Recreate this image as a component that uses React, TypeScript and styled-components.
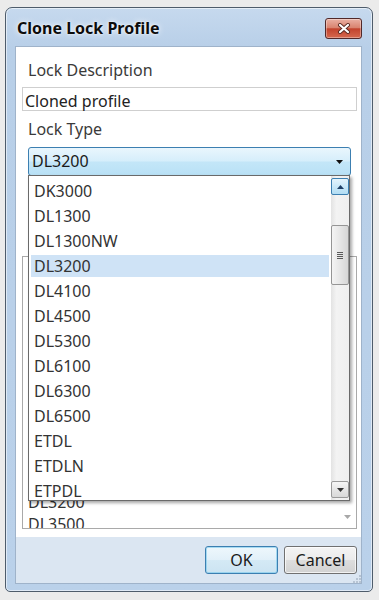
import React from "react";
import styled, { createGlobalStyle } from "styled-components";

const lockTypes = [
  "DK3000",
  "DL1300",
  "DL1300NW",
  "DL3200",
  "DL4100",
  "DL4500",
  "DL5300",
  "DL6100",
  "DL6300",
  "DL6500",
  "ETDL",
  "ETDLN",
  "ETPDL",
];

// only the tail of the profile list shows below the open dropdown
const profileLocks = ["DL3200", "DL3500"];

const GlobalStyle = createGlobalStyle`
  body {
    margin: 0;
    background: #ebebeb;
    font-family: "Noto Sans", "Open Sans", sans-serif;
  }
`;

const Page = styled.div`
  padding: 7px 0 0 5px;
`;

const Window = styled.div`
  width: 368px;
  height: 585px;
  box-sizing: border-box;
  border: 1px solid #4e5c6b;
  border-radius: 7px 7px 5px 5px;
  background: linear-gradient(#c6d9ee 0, #b8cfe8 40px, #bad1ea 100%);
  box-shadow: inset 0 0 0 1px rgba(255, 255, 255, 0.55);
  display: flex;
  flex-direction: column;
`;

const TitleBar = styled.div`
  height: 38px;
  flex-shrink: 0;
  display: flex;
  justify-content: space-between;
  align-items: flex-start;
  padding-left: 11px;
`;

const Title = styled.div`
  margin-top: 10px;
  font-size: 16px;
  line-height: 20px;
  font-weight: 700;
  color: #0c0c0c;
  text-shadow: 0 0 6px rgba(255, 255, 255, 0.95), 0 0 2px #fff;
`;

const CloseButton = styled.div`
  width: 37px;
  height: 21px;
  box-sizing: border-box;
  margin: 10px 10px 0 0;
  border: 1px solid #51292a;
  border-radius: 3px;
  background: linear-gradient(#eab0a3 0%, #d98470 45%, #c2432d 52%, #d5694f 100%);
  box-shadow: inset 0 0 0 1px rgba(255, 255, 255, 0.35);
  display: flex;
  align-items: center;
  justify-content: center;
`;

const Frame = styled.div`
  flex: 1;
  display: flex;
  padding: 0 10px 7px 9px;
`;

const Client = styled.div`
  flex: 1;
  display: flex;
  flex-direction: column;
  border: 1px solid #9fb3ca;
  background: #fff;
`;

const Content = styled.div`
  flex: 1;
  display: flex;
  flex-direction: column;
  padding: 12px 4px 0 6px;
`;

const Label = styled.div<{ gap?: number }>`
  margin-top: ${(p) => p.gap ?? 0}px;
  padding-left: 6px;
  font-size: 16px;
  line-height: 22px;
  color: #3a3a3a;
`;

const TextBox = styled.div`
  margin-top: 6px;
  height: 24px;
  box-sizing: border-box;
  border: 1px solid #cfcfcf;
  padding: 3px 2px 0;
  font-size: 16px;
  line-height: 20px;
  color: #222;
  white-space: nowrap;
`;

const Combo = styled.div`
  position: relative;
  margin: 7px 6px 0;
  height: 29px;
  box-sizing: border-box;
  border: 1px solid #3c7fb1;
  border-radius: 3px;
  background: linear-gradient(#e9f6fd 0%, #d6eefb 48%, #c3e6f8 52%, #b9e1f6 100%);
  padding: 2px 7px 0 3px;
  display: flex;
  justify-content: space-between;
  align-items: flex-start;
  font-size: 16px;
  line-height: 22px;
  color: #1a1a1a;
`;

const ComboArrow = styled.svg`
  margin-top: 10px;
`;

const Popup = styled.div`
  position: absolute;
  top: 100%;
  left: -1px;
  width: 322px;
  height: 326px;
  box-sizing: border-box;
  border: 1px solid #6a6a6a;
  background: #fff;
  box-shadow: 2px 2px 3px rgba(0, 0, 0, 0.35);
  display: flex;
  z-index: 2;
`;

const PopupItems = styled.div`
  flex: 1;
  overflow: hidden;
  padding: 3px 2px 0;
`;

const PopupItem = styled.div<{ selected?: boolean }>`
  height: 25px;
  padding-left: 3px;
  font-size: 16px;
  line-height: 25px;
  color: #333;
  background: ${(p) => (p.selected ? "#cfe3f6" : "transparent")};
  box-shadow: ${(p) =>
    p.selected ? "inset 0 1px 0 #fff, inset 0 -2px 0 #fff" : "none"};
`;

const ScrollBar = styled.div`
  width: 18px;
  flex-shrink: 0;
  display: flex;
  flex-direction: column;
  padding: 2px 0;
  box-sizing: border-box;
  background: linear-gradient(to right, #e3e3e3, #f3f3f3 30%, #efefef);
`;

const ScrollButton = styled.div<{ hover?: boolean }>`
  height: 17px;
  box-sizing: border-box;
  border: 1px solid ${(p) => (p.hover ? "#3c7fb1" : "#9a9a9a")};
  border-radius: 2px;
  background: ${(p) =>
    p.hover
      ? "linear-gradient(#e4f4fc, #c9e8f8 50%, #b2ddf4)"
      : "linear-gradient(#f6f6f6, #e6e6e6 50%, #d9d9d9)"};
  display: flex;
  align-items: center;
  justify-content: center;
`;

const Track = styled.div`
  flex: 1;
`;

const Thumb = styled.div`
  margin-top: 30px;
  height: 60px;
  box-sizing: border-box;
  border: 1px solid #959595;
  border-radius: 2px;
  background: linear-gradient(to right, #f4f4f4, #e6e6e6 50%, #d6d6d6);
  display: flex;
  align-items: center;
  justify-content: center;
`;

const ListBox = styled.div`
  margin-top: 80px;
  height: 273px;
  box-sizing: border-box;
  border: 1px solid #a9a9a9;
  display: flex;
  overflow: hidden;
`;

const ListItems = styled.div`
  flex: 1;
  padding: 234px 0 0 5px;
`;

const ListItem = styled.div`
  height: 22px;
  font-size: 16px;
  line-height: 22px;
  color: #333;
`;

const ListScroll = styled.div`
  width: 18px;
  display: flex;
  flex-direction: column;
  justify-content: flex-end;
  align-items: center;
  padding-bottom: 9px;
`;

const Footer = styled.div`
  position: relative;
  height: 46px;
  flex-shrink: 0;
  background: #dbe6f2;
  display: flex;
  justify-content: flex-end;
  align-items: flex-start;
  gap: 6px;
  padding: 9px 4px 0 0;
  box-sizing: border-box;
`;

const Button = styled.div<{ primary?: boolean }>`
  width: 73px;
  height: 28px;
  box-sizing: border-box;
  border: 1px solid ${(p) => (p.primary ? "#3c7fb1" : "#707070")};
  border-radius: 3px;
  background: ${(p) =>
    p.primary
      ? "linear-gradient(#eef7fc, #e1f0f9 50%, #d4e9f5 52%, #cce4f2)"
      : "linear-gradient(#f4f4f4, #ebebeb 50%, #dddddd 52%, #d2d2d2)"};
  box-shadow: ${(p) =>
    p.primary
      ? "inset 0 0 0 1px rgba(120, 200, 235, 0.6)"
      : "inset 0 0 0 1px rgba(255, 255, 255, 0.7)"};
  display: flex;
  align-items: center;
  justify-content: center;
  font-size: 16px;
  color: #1a1a1a;
`;

const Grip = styled.svg`
  position: absolute;
  right: 0;
  bottom: 0;
`;

export default function App() {
  return (
    <>
      <GlobalStyle />
      <Page>
        <Window>
          <TitleBar>
            <Title>Clone Lock Profile</Title>
            <CloseButton>
              <svg width="14" height="11" viewBox="0 0 14 11">
                <path
                  d="M3 2 L11 9 M11 2 L3 9"
                  stroke="#5a2a22"
                  strokeWidth="4"
                  strokeLinecap="round"
                />
                <path
                  d="M3 2 L11 9 M11 2 L3 9"
                  stroke="#fff"
                  strokeWidth="2.2"
                  strokeLinecap="round"
                />
              </svg>
            </CloseButton>
          </TitleBar>
          <Frame>
            <Client>
              <Content>
                <Label>Lock Description</Label>
                <TextBox>Cloned profile</TextBox>
                <Label gap={7}>Lock Type</Label>
                <Combo>
                  <span>DL3200</span>
                  <ComboArrow width="7" height="4" viewBox="0 0 7 4">
                    <path d="M0 0 H7 L3.5 4 Z" fill="#111" />
                  </ComboArrow>
                  <Popup>
                    <PopupItems>
                      {lockTypes.map((t) => (
                        <PopupItem key={t} selected={t === "DL3200"}>
                          {t}
                        </PopupItem>
                      ))}
                    </PopupItems>
                    <ScrollBar>
                      <ScrollButton hover>
                        <svg width="7" height="4" viewBox="0 0 7 4">
                          <path d="M0 4 H7 L3.5 0 Z" fill="#1e3f66" />
                        </svg>
                      </ScrollButton>
                      <Track>
                        <Thumb>
                          <svg width="6" height="7" viewBox="0 0 6 7">
                            <path
                              d="M0 0.5 H6 M0 2.5 H6 M0 4.5 H6 M0 6.5 H6"
                              stroke="#5a5a5a"
                              strokeWidth="1"
                            />
                          </svg>
                        </Thumb>
                      </Track>
                      <ScrollButton>
                        <svg width="7" height="4" viewBox="0 0 7 4">
                          <path d="M0 0 H7 L3.5 4 Z" fill="#333" />
                        </svg>
                      </ScrollButton>
                    </ScrollBar>
                  </Popup>
                </Combo>
                <ListBox>
                  <ListItems>
                    {profileLocks.map((t) => (
                      <ListItem key={t}>{t}</ListItem>
                    ))}
                  </ListItems>
                  <ListScroll>
                    <svg width="7" height="4" viewBox="0 0 7 4">
                      <path d="M0 0 H7 L3.5 4 Z" fill="#a8a8a8" />
                    </svg>
                  </ListScroll>
                </ListBox>
              </Content>
              <Footer>
                <Button primary>OK</Button>
                <Button>Cancel</Button>
                <Grip width="8" height="8" viewBox="0 0 8 8">
                  <g fill="#b7c4d3">
                    <rect x="6" y="0" width="2" height="2" />
                    <rect x="3" y="3" width="2" height="2" />
                    <rect x="6" y="3" width="2" height="2" />
                    <rect x="0" y="6" width="2" height="2" />
                    <rect x="3" y="6" width="2" height="2" />
                    <rect x="6" y="6" width="2" height="2" />
                  </g>
                </Grip>
              </Footer>
            </Client>
          </Frame>
        </Window>
      </Page>
    </>
  );
}
